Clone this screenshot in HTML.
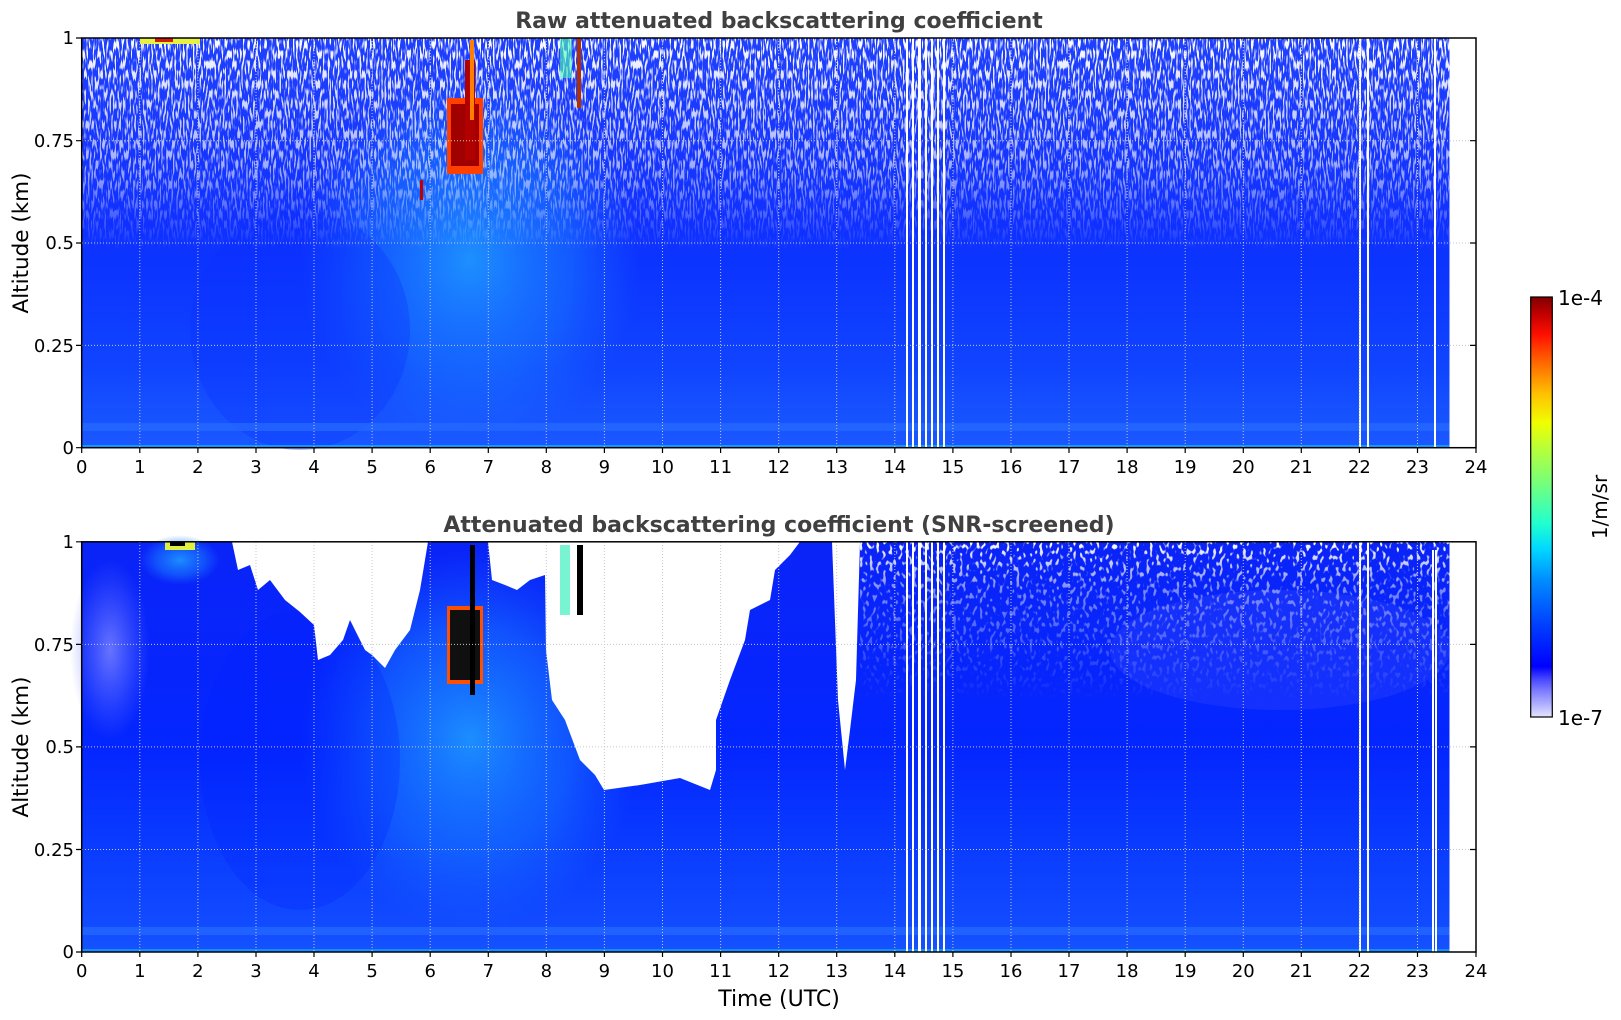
<!DOCTYPE html>
<html><head><meta charset="utf-8"><style>
html,body{margin:0;padding:0;background:#fff;}
svg{display:block;font-family:"DejaVu Sans","Liberation Sans",sans-serif;}
</style></head><body>
<svg width="1621" height="1020" viewBox="0 0 1621 1020" xmlns="http://www.w3.org/2000/svg">
<defs>
 <linearGradient id="b1" x1="0" y1="38" x2="0" y2="448" gradientUnits="userSpaceOnUse">
  <stop offset="0" stop-color="#2040ff"/><stop offset="0.45" stop-color="#1030ff"/>
  <stop offset="0.55" stop-color="#0c34ff"/><stop offset="0.8" stop-color="#1044ff"/>
  <stop offset="0.9" stop-color="#1650ff"/><stop offset="1" stop-color="#1a58ff"/>
 </linearGradient>
 <linearGradient id="b2" x1="0" y1="542" x2="0" y2="952" gradientUnits="userSpaceOnUse">
  <stop offset="0" stop-color="#0a24f8"/><stop offset="0.5" stop-color="#0426ff"/>
  <stop offset="0.75" stop-color="#0a3cff"/><stop offset="0.9" stop-color="#1048ff"/><stop offset="1" stop-color="#1652ff"/>
 </linearGradient>
 <radialGradient id="cy" cx="0.5" cy="0.5" r="0.5">
  <stop offset="0" stop-color="#20a0ff" stop-opacity="0.85"/><stop offset="0.6" stop-color="#1a80ff" stop-opacity="0.5"/><stop offset="1" stop-color="#1a70ff" stop-opacity="0"/>
 </radialGradient>
 <radialGradient id="lv" cx="0.5" cy="0.5" r="0.5">
  <stop offset="0" stop-color="#8088ff" stop-opacity="0.8"/><stop offset="1" stop-color="#6070ff" stop-opacity="0"/>
 </radialGradient>
 <linearGradient id="mg1" x1="0" y1="38" x2="0" y2="250" gradientUnits="userSpaceOnUse">
  <stop offset="0" stop-color="#fff"/><stop offset="0.6" stop-color="#999"/><stop offset="1" stop-color="#000"/>
 </linearGradient>
 <mask id="m1" maskUnits="userSpaceOnUse" x="0" y="0" width="1621" height="1020">
  <rect x="81.7" y="38" width="1368" height="215" fill="url(#mg1)"/>
 </mask>
 <linearGradient id="mg2" x1="0" y1="542" x2="0" y2="700" gradientUnits="userSpaceOnUse">
  <stop offset="0" stop-color="#fff"/><stop offset="0.3" stop-color="#777"/><stop offset="1" stop-color="#000"/>
 </linearGradient>
 <mask id="m2" maskUnits="userSpaceOnUse" x="0" y="0" width="1621" height="1020">
  <rect x="860" y="542" width="590" height="160" fill="url(#mg2)"/>
 </mask>
 <filter id="spk" filterUnits="userSpaceOnUse" x="81.7" y="38" width="1368" height="215">
  <feTurbulence type="fractalNoise" baseFrequency="0.6 0.1" numOctaves="1" seed="5"/>
  <feColorMatrix type="matrix" values="0 0 0 0 1  0 0 0 0 1  0 0 0 0 1  10 0 0 0 -5"/>
 </filter>
 <filter id="spk2" filterUnits="userSpaceOnUse" x="860" y="542" width="590" height="160">
  <feTurbulence type="fractalNoise" baseFrequency="0.3 0.18" numOctaves="1" seed="9"/>
  <feColorMatrix type="matrix" values="0 0 0 0 1  0 0 0 0 1  0 0 0 0 1  10 0 0 0 -5.5"/>
 </filter>
 <linearGradient id="jet" x1="0" y1="1" x2="0" y2="0">
  <stop offset="0" stop-color="#e4e4ff"/><stop offset="0.03" stop-color="#b0b0ff"/>
  <stop offset="0.06" stop-color="#8080ff"/><stop offset="0.09" stop-color="#4848ff"/>
  <stop offset="0.12" stop-color="#0000ff"/><stop offset="0.22" stop-color="#0040ff"/>
  <stop offset="0.33" stop-color="#0090ff"/><stop offset="0.4" stop-color="#00d8ff"/>
  <stop offset="0.46" stop-color="#20ffd0"/><stop offset="0.55" stop-color="#70ff80"/>
  <stop offset="0.65" stop-color="#c0ff30"/><stop offset="0.7" stop-color="#f0ff00"/>
  <stop offset="0.77" stop-color="#ffc000"/><stop offset="0.85" stop-color="#ff6000"/>
  <stop offset="0.91" stop-color="#ff1000"/><stop offset="0.96" stop-color="#c00000"/>
  <stop offset="1" stop-color="#800000"/>
 </linearGradient>
</defs>

<!-- ===== Plot 1 ===== -->
<text x="779" y="28" text-anchor="middle" font-size="22" font-weight="bold" fill="#404040">Raw attenuated backscattering coefficient</text>
<rect x="81.7" y="38" width="1367.8" height="409.7" fill="url(#b1)"/>
<ellipse cx="470" cy="260" rx="170" ry="190" fill="url(#cy)"/>
<ellipse cx="300" cy="330" rx="110" ry="120" fill="#0a30ff" opacity="0.3"/>
<g mask="url(#m1)"><rect x="81.7" y="38" width="1368" height="215" fill="#fff" filter="url(#spk)"/></g>
<rect x="81.7" y="423" width="1367.8" height="8" fill="#2468ff" opacity="0.8"/>
<rect x="81.7" y="445" width="1367.8" height="2.7" fill="#10b8ff" opacity="0.7"/>
<rect x="140" y="38" width="60" height="6" fill="#e8f040"/>
<rect x="155" y="38" width="18" height="4" fill="#d02000"/>
<rect x="447" y="98" width="36" height="76" fill="#ff4000"/>
<rect x="451" y="104" width="28" height="62" fill="#a00000"/>
<rect x="465" y="60" width="10" height="100" fill="#b00000"/>
<rect x="470" y="40" width="4" height="80" fill="#ff8000"/>
<rect x="420" y="180" width="3" height="20" fill="#c00000"/>
<rect x="577" y="38" width="4" height="70" fill="#b03000"/>
<rect x="560" y="38" width="12" height="40" fill="#50ffb0" opacity="0.6"/>
<g fill="#fff">
 <rect x="906" y="38" width="2" height="410"/><rect x="912" y="38" width="2" height="410"/>
 <rect x="918" y="38" width="3" height="410"/><rect x="925" y="38" width="2" height="410"/>
 <rect x="931" y="38" width="2" height="410"/><rect x="937" y="38" width="2" height="410"/>
 <rect x="943" y="38" width="2" height="410"/>
 <rect x="1359" y="38" width="2" height="410"/><rect x="1367" y="38" width="2" height="410"/>
 <rect x="1434" y="38" width="2" height="410"/>
</g>
<g stroke="#c8c8c8" stroke-width="1" stroke-dasharray="1,2">
 <path d="M139.8 38V448M197.9 38V448M256 38V448M314 38V448M372.1 38V448M430.2 38V448M488.3 38V448M546.3 38V448M604.4 38V448M662.5 38V448M720.6 38V448M778.7 38V448M836.7 38V448M894.8 38V448M952.9 38V448M1011 38V448M1069 38V448M1127.1 38V448M1185.2 38V448M1243.3 38V448M1301.3 38V448M1359.4 38V448M1417.5 38V448"/>
 <path d="M82 140.7H1476M82 243H1476M82 345.4H1476"/>
</g>
<rect x="81.7" y="38" width="1394.3" height="409.7" fill="none" stroke="#000" stroke-width="1.5"/>
<g stroke="#000" stroke-width="1.2">
 <path d="M81.7 448v5M139.8 448v5M197.9 448v5M256 448v5M314 448v5M372.1 448v5M430.2 448v5M488.3 448v5M546.3 448v5M604.4 448v5M662.5 448v5M720.6 448v5M778.7 448v5M836.7 448v5M894.8 448v5M952.9 448v5M1011 448v5M1069 448v5M1127.1 448v5M1185.2 448v5M1243.3 448v5M1301.3 448v5M1359.4 448v5M1417.5 448v5M1476 448v5"/>
 <path d="M76 38h6M76 140.7h6M76 243h6M76 345.4h6M76 447.7h6M1470 140.7h6M1470 243h6M1470 345.4h6"/>
</g>
<g font-size="18" fill="#000" text-anchor="end">
 <text x="74" y="44">1</text><text x="74" y="147">0.75</text><text x="74" y="249">0.5</text><text x="74" y="352">0.25</text><text x="74" y="454">0</text>
</g>
<g font-size="18" fill="#000" text-anchor="middle">
 <text x="81.7" y="473">0</text><text x="139.8" y="473">1</text><text x="197.9" y="473">2</text><text x="256" y="473">3</text><text x="314" y="473">4</text><text x="372.1" y="473">5</text><text x="430.2" y="473">6</text><text x="488.3" y="473">7</text><text x="546.3" y="473">8</text><text x="604.4" y="473">9</text><text x="662.5" y="473">10</text><text x="720.6" y="473">11</text><text x="778.7" y="473">12</text><text x="836.7" y="473">13</text><text x="894.8" y="473">14</text><text x="952.9" y="473">15</text><text x="1011" y="473">16</text><text x="1069" y="473">17</text><text x="1127.1" y="473">18</text><text x="1185.2" y="473">19</text><text x="1243.3" y="473">20</text><text x="1301.3" y="473">21</text><text x="1359.4" y="473">22</text><text x="1417.5" y="473">23</text><text x="1476" y="473">24</text>
</g>
<text transform="translate(28,243) rotate(-90)" text-anchor="middle" font-size="21.5" fill="#000">Altitude (km)</text>

<!-- ===== Plot 2 ===== -->
<text x="779" y="532" text-anchor="middle" font-size="22" font-weight="bold" fill="#404040">Attenuated backscattering coefficient (SNR-screened)</text>
<rect x="81.7" y="541.8" width="1367.8" height="410.2" fill="url(#b2)"/>
<ellipse cx="110" cy="650" rx="40" ry="90" fill="url(#lv)"/>
<ellipse cx="470" cy="740" rx="170" ry="190" fill="url(#cy)"/>
<ellipse cx="180" cy="560" rx="40" ry="25" fill="url(#cy)"/>
<ellipse cx="300" cy="760" rx="100" ry="150" fill="#0020ff" opacity="0.25"/>
<ellipse cx="1280" cy="650" rx="170" ry="60" fill="#5060ff" opacity="0.2"/>
<g mask="url(#m2)"><rect x="860" y="542" width="590" height="160" fill="#fff" filter="url(#spk2)"/></g>
<rect x="81.7" y="927" width="1367.8" height="8" fill="#2468ff" opacity="0.8"/>
<rect x="81.7" y="949" width="1367.8" height="3" fill="#10b8ff" opacity="0.6"/>
<path fill="#fff" d="M232 541.8 L238 570 L250 565 L258 590 L270 580 L285 600 L300 612 L314 625 L318 660 L330 655 L343 640 L350 620 L365 650 L372 655 L385 668 L395 650 L410 630 L420 590 L425 560 L428 541.8 Z"/>
<path fill="#fff" d="M488 541.8 L492 580 L505 585 L517 590 L530 580 L545 575 L546 650 L552 700 L565 720 L580 760 L595 775 L604 790 L640 785 L680 778 L710 790 L716 770 L716 720 L730 680 L745 640 L750 610 L770 600 L775 570 L790 555 L800 541.8 Z"/>
<path fill="#fff" d="M832 541.8 L838 700 L845 770 L850 730 L856 680 L860 541.8 Z"/>
<rect x="447" y="606" width="36" height="78" fill="#ff5000"/>
<rect x="450" y="610" width="30" height="70" fill="#101010"/>
<rect x="470" y="545" width="5" height="150" fill="#000"/>
<rect x="577" y="545" width="6" height="70" fill="#000"/>
<rect x="560" y="545" width="10" height="70" fill="#40f0c0" opacity="0.7"/>
<rect x="165" y="542" width="30" height="8" fill="#e0f040"/><rect x="170" y="542" width="15" height="4" fill="#000"/>
<g fill="#fff">
 <rect x="906" y="542" width="2" height="410"/><rect x="912" y="542" width="2" height="410"/>
 <rect x="918" y="542" width="3" height="410"/><rect x="925" y="542" width="2" height="410"/>
 <rect x="931" y="542" width="2" height="410"/><rect x="937" y="542" width="2" height="410"/>
 <rect x="943" y="542" width="2" height="410"/>
 <rect x="1359" y="542" width="2" height="410"/><rect x="1367" y="542" width="2" height="410"/>
 <rect x="1432" y="550" width="2" height="402"/><rect x="1435" y="550" width="2" height="402"/>
</g>
<g stroke="#c8c8c8" stroke-width="1" stroke-dasharray="1,2">
 <path d="M139.8 542V952M197.9 542V952M256 542V952M314 542V952M372.1 542V952M430.2 542V952M488.3 542V952M546.3 542V952M604.4 542V952M662.5 542V952M720.6 542V952M778.7 542V952M836.7 542V952M894.8 542V952M952.9 542V952M1011 542V952M1069 542V952M1127.1 542V952M1185.2 542V952M1243.3 542V952M1301.3 542V952M1359.4 542V952M1417.5 542V952"/>
 <path d="M82 644.4H1476M82 746.9H1476M82 849.5H1476"/>
</g>
<rect x="81.7" y="541.8" width="1394.3" height="410.2" fill="none" stroke="#000" stroke-width="1.5"/>
<g stroke="#000" stroke-width="1.2">
 <path d="M81.7 952v5M139.8 952v5M197.9 952v5M256 952v5M314 952v5M372.1 952v5M430.2 952v5M488.3 952v5M546.3 952v5M604.4 952v5M662.5 952v5M720.6 952v5M778.7 952v5M836.7 952v5M894.8 952v5M952.9 952v5M1011 952v5M1069 952v5M1127.1 952v5M1185.2 952v5M1243.3 952v5M1301.3 952v5M1359.4 952v5M1417.5 952v5M1476 952v5"/>
 <path d="M76 541.8h6M76 644.4h6M76 746.9h6M76 849.5h6M76 952h6M1470 644.4h6M1470 746.9h6M1470 849.5h6"/>
</g>
<g font-size="18" fill="#000" text-anchor="end">
 <text x="74" y="548">1</text><text x="74" y="651">0.75</text><text x="74" y="753">0.5</text><text x="74" y="856">0.25</text><text x="74" y="958">0</text>
</g>
<g font-size="18" fill="#000" text-anchor="middle">
 <text x="81.7" y="977">0</text><text x="139.8" y="977">1</text><text x="197.9" y="977">2</text><text x="256" y="977">3</text><text x="314" y="977">4</text><text x="372.1" y="977">5</text><text x="430.2" y="977">6</text><text x="488.3" y="977">7</text><text x="546.3" y="977">8</text><text x="604.4" y="977">9</text><text x="662.5" y="977">10</text><text x="720.6" y="977">11</text><text x="778.7" y="977">12</text><text x="836.7" y="977">13</text><text x="894.8" y="977">14</text><text x="952.9" y="977">15</text><text x="1011" y="977">16</text><text x="1069" y="977">17</text><text x="1127.1" y="977">18</text><text x="1185.2" y="977">19</text><text x="1243.3" y="977">20</text><text x="1301.3" y="977">21</text><text x="1359.4" y="977">22</text><text x="1417.5" y="977">23</text><text x="1476" y="977">24</text>
</g>
<text transform="translate(28,747) rotate(-90)" text-anchor="middle" font-size="21.5" fill="#000">Altitude (km)</text>
<text x="779" y="1006" text-anchor="middle" font-size="22" fill="#000">Time (UTC)</text>

<!-- ===== Colorbar ===== -->
<rect x="1530.7" y="297" width="21.6" height="420" fill="url(#jet)" stroke="#000" stroke-width="1.2"/>
<text x="1558" y="305" font-size="20" fill="#000">1e-4</text>
<text x="1558" y="725" font-size="20" fill="#000">1e-7</text>
<text transform="translate(1607,507) rotate(-90)" text-anchor="middle" font-size="20" fill="#000">1/m/sr</text>
</svg>
</body></html>
